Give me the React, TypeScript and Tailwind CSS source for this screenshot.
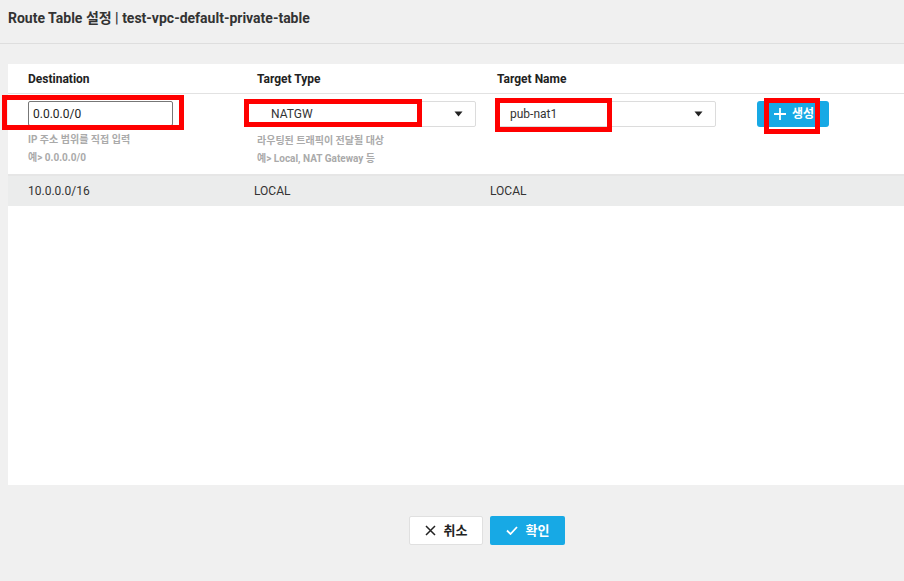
import React from "react";

const font = { fontFamily: "Roboto, 'Noto Sans CJK KR', sans-serif" };

function Caret() {
  return (
    <svg width="9" height="6" viewBox="0 0 9 6" className="fill-[#222]">
      <path d="M0.5 0.5h8L4.5 5.5z" />
    </svg>
  );
}

function SelectBox({ value, width, textPad }: { value: string; width: string; textPad: string }) {
  return (
    <div
      className={`flex h-[26px] items-center justify-between rounded-[2px] border border-[#dcdcdc] bg-white pr-[12px] ${width} ${textPad}`}
    >
      <span className="text-[12px] text-[#333]">{value}</span>
      <Caret />
    </div>
  );
}

function RedBox({ className }: { className: string }) {
  return <div className={`pointer-events-none absolute border-[5px] border-[#ff0000] ${className}`} />;
}

export default function App() {
  return (
    <div className="relative flex h-[581px] w-[904px] flex-col overflow-hidden bg-[#f0f0f0]" style={font}>
      <div className="flex h-[44px] items-center border-b border-[#dedede] px-[8px] pb-[6px]">
        <h1 className="text-[14px] font-bold text-[#333]">Route Table 설정 | test-vpc-default-private-table</h1>
      </div>

      <div className="ml-[8px] mt-[20px] flex h-[421px] w-[910px] flex-col bg-white">
        {/* header row */}
        <div className="flex h-[30px] items-center border-b border-[#e2e2e2] text-[12px] font-bold text-[#222]">
          <div className="w-[237px] pl-[20px]">Destination</div>
          <div className="w-[250px] pl-[12px]">Target Type</div>
          <div className="pl-[2px]">Target Name</div>
        </div>

        {/* input row */}
        <div className="flex h-[82px] border-b-2 border-[#e6e6e6] pt-[7px]">
          <div className="w-[237px] pl-[20px]">
            <div className="flex h-[25px] w-[145px] items-center rounded-[2px] border border-[#777] px-[4px] text-[12px] text-[#222]">
              0.0.0.0/0
            </div>
            <div className="mt-[5px] text-[10px] font-bold leading-[18px] text-[#aaa]">
              <div>IP 주소 범위를 직접 입력</div>
              <div>예&gt; 0.0.0.0/0</div>
            </div>
          </div>
          <div className="w-[250px]">
            <SelectBox value="NATGW" width="w-[231px]" textPad="pl-[25px]" />
            <div className="mt-[5px] pl-[12px] text-[10px] font-bold leading-[18px] text-[#aaa]">
              <div>라우팅된 트래픽이 전달될 대상</div>
              <div>예&gt; Local, NAT Gateway 등</div>
            </div>
          </div>
          <div className="w-[262px]">
            <SelectBox value="pub-nat1" width="w-[221px]" textPad="pl-[14px]" />
          </div>
          <div>
            <button className="flex h-[26px] w-[72px] items-center justify-center gap-[6px] rounded-[3px] bg-[#17a9e5] pl-[2px] text-[12px] font-bold text-white">
              <svg width="12" height="12" viewBox="0 0 12 12" className="stroke-white" strokeWidth="1.8">
                <path d="M6 0v12M0 6h12" />
              </svg>
              생성
            </button>
          </div>
        </div>

        {/* data row */}
        <div className="flex h-[30px] items-center bg-[#ebecec] text-[12px] text-[#333]">
          <div className="w-[246px] pl-[20px]">10.0.0.0/16</div>
          <div className="w-[236px]">LOCAL</div>
          <div>LOCAL</div>
        </div>
      </div>

      <div className="mt-[31px] flex justify-center gap-[7px] pl-[70px]">
        <button className="flex h-[29px] w-[74px] items-center justify-center gap-[8px] rounded-[2px] border border-[#e0e0e0] bg-white text-[13px] font-bold text-[#222]">
          <svg width="11" height="11" viewBox="0 0 11 11" className="stroke-[#222]" strokeWidth="1.5">
            <path d="M1 1l9 9M10 1l-9 9" />
          </svg>
          취소
        </button>
        <button className="flex h-[29px] w-[75px] items-center justify-center gap-[8px] rounded-[2px] bg-[#17a9e5] text-[13px] font-bold text-white">
          <svg width="12" height="9" viewBox="0 0 12 9" fill="none" className="stroke-white" strokeWidth="1.8">
            <path d="M1 4.5l3.5 3.5L11 1" />
          </svg>
          확인
        </button>
      </div>

      <RedBox className="left-[2px] top-[95px] h-[35px] w-[182px]" />
      <RedBox className="left-[244px] top-[99px] h-[28px] w-[178px]" />
      <RedBox className="left-[495px] top-[98px] h-[34px] w-[117px]" />
      <RedBox className="left-[764px] top-[98px] h-[36px] w-[56px]" />
    </div>
  );
}
